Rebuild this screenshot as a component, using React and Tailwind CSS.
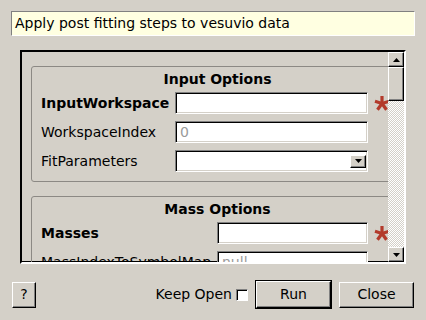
import React from "react";

const Star = () => (
  <svg width="16" height="16" viewBox="0 0 16 16" className="shrink-0">
    <g stroke="#b33a2b" strokeWidth="3.2" strokeLinecap="butt">
      <line x1="8" y1="8.5" x2="8" y2="1" />
      <line x1="8" y1="8.5" x2="15" y2="6.3" />
      <line x1="8" y1="8.5" x2="1" y2="6.3" />
      <line x1="8" y1="8.5" x2="12.5" y2="14.8" />
      <line x1="8" y1="8.5" x2="3.5" y2="14.8" />
    </g>
  </svg>
);

const fieldCls =
  "h-[22px] bg-white border border-t-[#808080] border-l-[#808080] border-r-[#ffffff] border-b-[#ffffff] shadow-[inset_1px_1px_0_#000,inset_-1px_-1px_0_#d4d0c8] flex items-center px-[4px] text-[14px]";

const raised =
  "border border-t-[#ffffff] border-l-[#ffffff] border-r-[#000000] border-b-[#000000] shadow-[inset_-1px_-1px_0_#808080]";

function Row({ label, bold, width, children, star }) {
  return (
    <div className="flex items-center h-[22px]">
      <div className={`flex-1 whitespace-nowrap text-[14px] text-[#000] ${bold ? "font-bold" : ""}`}>{label}</div>
      <div className={fieldCls} style={{ width }}>
        {children}
      </div>
      <div className="w-[20px] ml-[6px] flex items-center">{star ? <Star /> : null}</div>
    </div>
  );
}

export default function App() {
  return (
    <div
      className="w-[426px] h-[320px] bg-[#d4d0c8] flex flex-col overflow-hidden text-black"
      style={{ fontFamily: '"DejaVu Sans", sans-serif' }}
    >
      <div className="mt-[11px] mx-[11px] h-[25px] bg-[#ffffe1] border border-t-[#808080] border-l-[#808080] border-r-[#ffffff] border-b-[#ffffff] flex items-center px-[3px] text-[14px]">
        Apply post fitting steps to vesuvio data
      </div>

      <div className="mt-[14px] ml-[20px] w-[386px] h-[214px] border-2 border-t-[#000] border-l-[#000] border-r-[#fff] border-b-[#fff] shadow-[inset_-1px_-1px_0_#000] flex">
        <div className="flex-1 overflow-hidden">
          <div className="pt-[14px] pl-[9px] w-[393px] flex flex-col gap-[14px]">
            <div className="w-[374px] border border-[#8c8984] rounded-[3px] pl-[9px] pr-[10px] pb-[9px]">
              <div className="h-[23px] pt-[1px] flex items-center justify-center text-[14px] font-bold">Input Options</div>
              <div className="mt-[2px] flex flex-col gap-[7px]">
                <Row label="InputWorkspace" bold width={193} star />
                <Row label="WorkspaceIndex" width={193}>
                  <span className="text-[#9a9a9a]">0</span>
                </Row>
                <Row label="FitParameters" width={193}>
                  <div className="flex-1" />
                  <div className={`w-[16px] h-[13px] bg-[#d4d0c8] ${raised} flex items-center justify-center -mr-[3px]`}>
                    <svg width="7" height="4" viewBox="0 0 7 4"><path d="M0 0h7L3.5 4z" fill="#000" /></svg>
                  </div>
                </Row>
              </div>
            </div>
            <div className="w-[374px] border border-[#8c8984] rounded-[3px] pl-[9px] pr-[10px] pb-[9px]">
              <div className="h-[23px] pt-[1px] flex items-center justify-center text-[14px] font-bold">Mass Options</div>
              <div className="mt-[2px] flex flex-col gap-[7px]">
                <Row label="Masses" bold width={151} star />
                <Row label="MassIndexToSymbolMap" width={151}>
                  <span className="text-[#9a9a9a]">null</span>
                </Row>
              </div>
            </div>
          </div>
        </div>
        <div className="w-[16px] flex flex-col">
          <div className={`h-[15px] bg-[#d4d0c8] ${raised} flex items-center justify-center`}>
            <svg width="7" height="4" viewBox="0 0 7 4"><path d="M3.5 0L7 4H0z" fill="#000" /></svg>
          </div>
          <div className={`h-[34px] bg-[#d4d0c8] ${raised}`} />
          <div className="flex-1 bg-[repeating-conic-gradient(#ffffff_0%_25%,#d4d0c8_0%_50%)] bg-size-[2px_2px]" />
          <div className={`h-[15px] bg-[#d4d0c8] ${raised} flex items-center justify-center`}>
            <svg width="7" height="4" viewBox="0 0 7 4"><path d="M0 0h7L3.5 4z" fill="#000" /></svg>
          </div>
        </div>
      </div>

      <div className="mt-[16px] flex items-center pl-[12px] pr-[12px]">
        <div className={`w-[24px] h-[26px] ${raised} flex items-center justify-center text-[14px]`}>?</div>
        <div className="flex-1" />
        <span className="text-[14px]">Keep Open</span>
        <div className="ml-[4px] w-[12px] h-[12px] bg-white border border-t-[#808080] border-l-[#808080] border-r-[#fff] border-b-[#fff] shadow-[inset_1px_1px_0_#000]" />
        <div className="ml-[7px] w-[77px] h-[29px] border border-black">
          <div className={`w-full h-full ${raised} flex items-center justify-center text-[14px]`}>Run</div>
        </div>
        <div className={`ml-[7px] w-[75px] h-[26px] ${raised} flex items-center justify-center text-[14px]`}>Close</div>
      </div>
    </div>
  );
}
